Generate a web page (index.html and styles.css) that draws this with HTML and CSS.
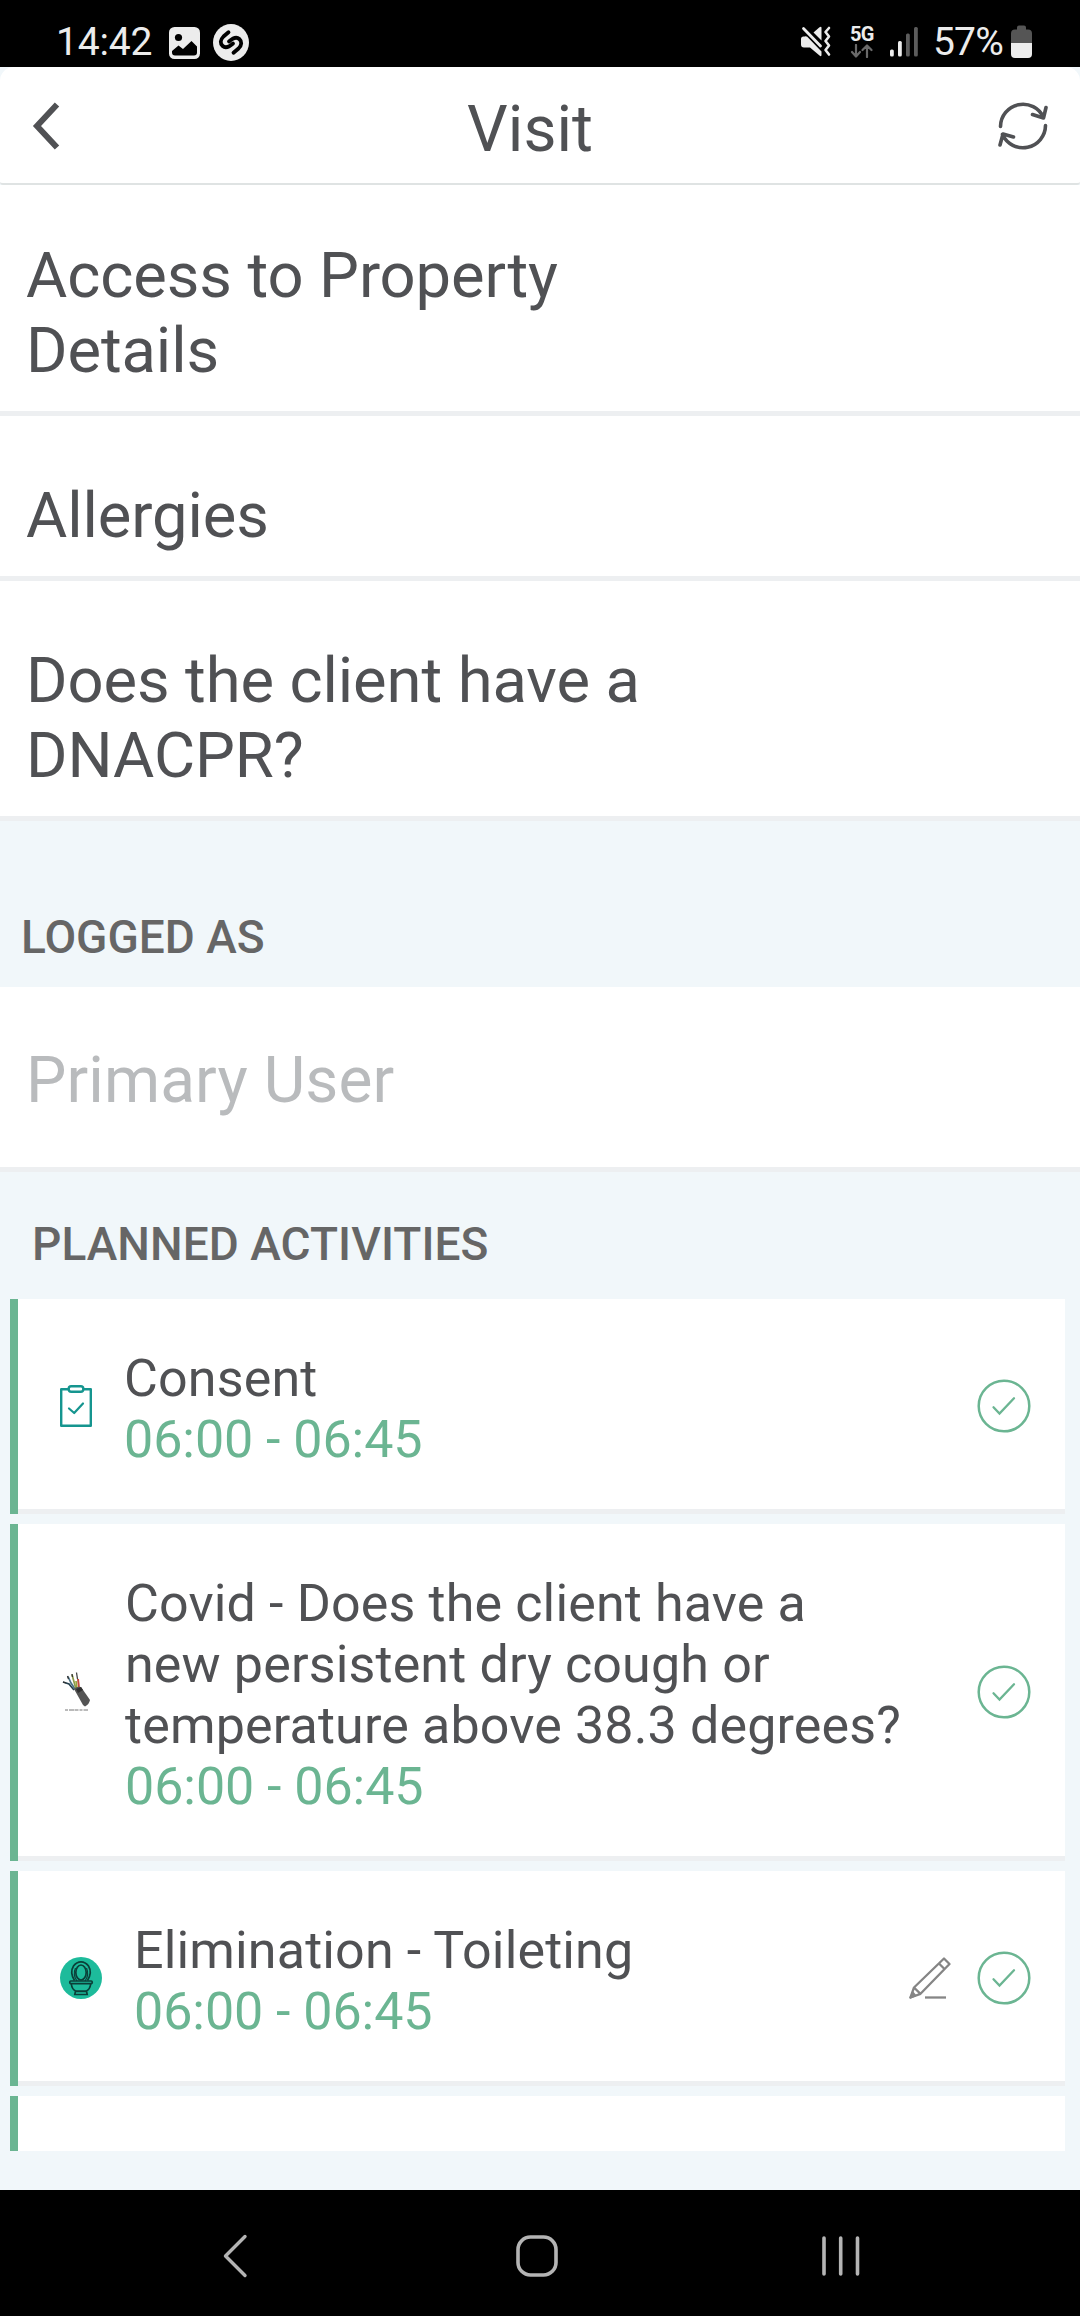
FILE: index.html
```html
<!DOCTYPE html>
<html lang="en">
<head>
<meta charset="utf-8">
<title>Visit</title>
<link rel="stylesheet" href="styles.css">
</head>
<body>
<svg width="0" height="0" class="defs">
  <symbol id="check" viewBox="0 0 54 54">
    <circle cx="27" cy="27" r="25.3" fill="none" stroke="#6bb592" stroke-width="2.5"/>
    <path d="M16.5 28.3 L22.5 34.5 L37 19.3" fill="none" stroke="#6bb592" stroke-width="2.3" stroke-linecap="round"/>
  </symbol>
</svg>
<div class="screen">
  <div class="status">
    <span class="clock">14:42</span>
    <svg class="s-image" width="31" height="32" viewBox="0 0 31 32">
      <rect width="31" height="32" rx="5.5" fill="#ececec"/>
      <circle cx="9.5" cy="10.5" r="3.6" fill="#000"/>
      <path d="M3 24 L9.500 18.500 L14 22 L22.500 14 L28 19.500 V25.500 Q28 28.500 25 28.500 H6 Q3 28.500 3 25.500 Z" fill="#000"/>
    </svg>
    <svg class="s-music" width="36" height="37" viewBox="0 0 36 37">
      <ellipse cx="18" cy="18.500" rx="18" ry="18.500" fill="#ececec"/>
      <g fill="none" stroke="#000" stroke-width="3.800" stroke-linecap="round">
        <path d="M15.500 8.300 L10.500 12.500 C7 16 7 19.500 9.700 22 C12.500 24.500 15.500 23.500 20 19.500"/>
        <path d="M20.500 28.700 L25.500 24.500 C29 21 29 17.500 26.300 15 C23.500 12.500 20.500 13.500 16 17.500"/>
      </g>
    </svg>
    <svg class="s-mute" width="31" height="31" viewBox="0 0 31 31">
      <path d="M0 13 Q0 10.500 2.500 10.500 H6 L20.500 25.500 V29 Q20.500 31 18.500 29.500 L9 21.500 H3 Q0 21.500 0 18.500 Z" fill="#ececec"/>
      <path d="M12.500 6.500 L18.500 1.300 Q20.500 0 20.500 2 V14.500 Z" fill="#ececec"/>
      <path d="M2.500 2.500 L19.500 20" stroke="#ececec" stroke-width="2.800" stroke-linecap="round"/>
      <path d="M4 10 L14 20 V24 L5 16 Z" fill="#ececec"/>
      <path d="M28 2 L24.500 6 L28 10.500 L24.500 15 L28 19.500 L24.500 24 L28 28.500" fill="none" stroke="#ececec" stroke-width="2.600" stroke-linecap="round" stroke-linejoin="round"/>
    </svg>
    <div class="net">
      <span>5G</span>
      <svg width="24" height="14" viewBox="0 0 24 14" fill="none" stroke="#6a6a6a" stroke-width="2.200" stroke-linecap="round" stroke-linejoin="round">
        <path d="M6 1 V12 M2 8 L6 12.500 L10 8 M17 13 V2 M12.500 6 L17 1.500 L21.500 6"/>
      </svg>
    </div>
    <svg class="s-signal" width="29" height="30" viewBox="0 0 29 30">
      <rect x="0" y="22.500" width="3.800" height="7" rx="1.500" fill="#ececec"/>
      <rect x="8" y="14" width="3.800" height="15.500" rx="1.500" fill="#ececec"/>
      <rect x="16" y="6.500" width="3.800" height="23" rx="1.500" fill="#5c5c5c"/>
      <rect x="24" y="0" width="3.800" height="29.500" rx="1.500" fill="#5c5c5c"/>
    </svg>
    <span class="percent">57%</span>
    <svg class="s-battery" width="21" height="33" viewBox="0 0 21 33">
      <path d="M6 4.500 V2.500 Q6 0.500 8 0.500 H13 Q15 0.500 15 2.500 V4.500 H17 Q21 4.500 21 8.500 V18 H0 V8.500 Q0 4.500 4 4.500 Z" fill="#555"/>
      <path d="M0 18 H21 V29 Q21 33 17 33 H4 Q0 33 0 29 Z" fill="#ececec"/>
    </svg>
  </div>

  <header class="header">
    <svg width="30" height="50" viewBox="0 0 30 50">
      <path d="M26 3.500 L6 25 L26 46.500" fill="none" stroke="#505154" stroke-width="6"/>
    </svg>
    <h1>Visit</h1>
    <svg width="50" height="50" viewBox="0 0 50 50" fill="none" stroke="#505154" stroke-width="3.600" stroke-linecap="round" stroke-linejoin="round">
      <path d="M2.500 25.500 A22.500 22.500 0 0 1 45.500 16.500 M34.500 13.500 L45.500 17 L48 6.500"/>
      <path d="M47.500 24.500 A22.500 22.500 0 0 1 4.500 33.500 M15.500 36 L5 33 L2 44"/>
    </svg>
  </header>

  <main>
    <div class="row row-first"><p>Access to Property Details</p></div>
    <div class="row"><p>Allergies</p></div>
    <div class="row"><p>Does the client have a DNACPR?</p></div>
    <h2 class="logged">LOGGED AS</h2>
    <div class="row user"><p>Primary User</p></div>
    <h2 class="planned">PLANNED ACTIVITIES</h2>
    <div class="cards">
      <article class="card">
        <svg class="icon" width="32" height="42" viewBox="0 0 32 42" fill="none" stroke="#15958f" stroke-width="2.400" stroke-linejoin="round">
          <path d="M8 4.200 H1.200 V40.800 H30.800 V4.200 H24"/>
          <rect x="8.700" y="1.300" width="14.600" height="5.400" rx="2.500"/>
          <path d="M9 23.500 L14.200 28 L23 18.500" stroke-linecap="round" stroke-width="2.200"/>
        </svg>
        <div class="text text-1"><p>Consent</p><time>06:00 - 06:45</time></div>
        <svg class="check" width="54" height="54"><use href="#check"/></svg>
      </article>
      <article class="card">
        <svg class="icon" width="32" height="42" viewBox="0 0 32 42">
          <g fill="none" stroke-width="1.700">
            <path d="M14 19 L9 13 L3 11" stroke="#26404d"/>
            <path d="M15 18 L11 12 L8 5.500" stroke="#4d7388"/>
            <path d="M16 18 L13.500 9 L12 3.500" stroke="#8e9a48"/>
            <path d="M17 18 L16 10" stroke="#96a63c"/>
            <path d="M19 17 L18 8" stroke="#c34b3e" stroke-width="2"/>
            <path d="M17.500 8 L16.500 1.500" stroke="#444" stroke-width="1.300"/>
            <path d="M12.500 6 L12 3 M8.500 8 L7.500 5 M3 11 L6 12" stroke="#333" stroke-width="1.300"/>
          </g>
          <path d="M14 18 Q17 15 21 16 L30 29 Q29 33.500 25 35.500 L23 34 Z" fill="#545454"/>
          <path d="M16 18 L21 16 L23 19 L18 22 Z" fill="#303030"/>
          <path d="M5 39 H28" stroke="#777" stroke-width="1" stroke-dasharray="3 1 5 .5 4 1"/>
        </svg>
        <div class="text text-2"><p>Covid - Does the client have a new persistent dry cough or temperature above 38.3 degrees?</p><time>06:00 - 06:45</time></div>
        <svg class="check" width="54" height="54"><use href="#check"/></svg>
      </article>
      <article class="card">
        <svg class="icon" width="42" height="42" viewBox="0 0 42 42" fill="none" stroke="#0b3f38" stroke-width="1.700">
          <circle cx="21" cy="21" r="21" fill="#1dbb9b" stroke="none"/>
          <path d="M14.500 23.500 Q9.500 15.500 13.500 9 Q16.500 4.800 21 4.800 Q25.500 4.800 28.500 9 Q32.500 15.500 27.500 23.500"/>
          <ellipse cx="21" cy="15.500" rx="5.200" ry="7.500"/>
          <path d="M17 24 Q12.500 18 15.500 11 M25 24 Q29.500 18 26.500 11" stroke-width="1.200"/>
          <rect x="9.800" y="24" width="22.400" height="2.600" rx="1"/>
          <path d="M11.300 27 Q12 32.500 16 34.200 H26 Q30 32.500 30.700 27 M15.500 34.200 L14.800 37.500 H27.200 L26.500 34.200 M15 34.500 H27"/>
        </svg>
        <div class="text text-3"><p>Elimination - Toileting</p><time>06:00 - 06:45</time></div>
        <svg class="pencil" width="42" height="42" viewBox="0 0 42 42" fill="none" stroke="#858585" stroke-width="2.300" stroke-linejoin="round">
          <path d="M5 30.500 L35 1.500 L40.500 7 L11.500 36.800 L1.500 40.500 Z M5 30.500 L11.500 36.800 M30 6.500 L35.500 12"/>
          <path d="M1.500 40.500 L4 36 L6 38.500 Z" fill="#858585"/>
          <path d="M16 40.500 H37"/>
        </svg>
        <svg class="check" width="54" height="54"><use href="#check"/></svg>
      </article>
      <div class="card card-cut"></div>
    </div>
  </main>

  <nav class="nav">
    <svg width="26" height="44" viewBox="0 0 26 44"><path d="M23 2.500 L3.500 22 L23 41.500" fill="none" stroke="#b4b4b4" stroke-width="3.400" stroke-linecap="round" stroke-linejoin="round"/></svg>
    <svg width="42" height="44" viewBox="0 0 42 44"><rect x="2" y="3" width="38" height="38" rx="12.500" fill="none" stroke="#b4b4b4" stroke-width="3.600"/></svg>
    <svg width="38" height="44" viewBox="0 0 38 44"><path d="M2 4 V40 M18.700 4 V40 M35.500 4 V40" stroke="#b4b4b4" stroke-width="3.600" stroke-linecap="round"/></svg>
  </nav>
</div>
</body>
</html>
```
FILE: styles.css
```css
* { box-sizing: border-box; }
body { margin: 0; background: #f1f7fa; font-family: Roboto, sans-serif; color: #505154; }
h1, h2, p { margin: 0; font-weight: 400; }
svg { display: block; flex: none; }
.defs { position: absolute; }
.screen { width: 1080px; height: 2316px; display: flex; flex-direction: column; overflow: hidden; }

.status { height: 67px; flex: none; background: #000; color: #ececec; display: flex; align-items: flex-start; padding-left: 56px; font-size: 39px; line-height: 46px; }
.clock { width: 113px; padding-top: 19px; letter-spacing: -0.2px; }
.s-image { margin-top: 27px; }
.s-music { margin: 24px 0 0 13px; }
.s-mute { margin: 26px 0 0 552px; }
.net { width: 24px; margin: 24px 0 0 18px; font-size: 20px; line-height: 20px; font-weight: 700; }
.net span { display: block; letter-spacing: -0.6px; }
.s-signal { margin: 27px 0 0 16px; }
.percent { width: 78px; margin-left: 14px; padding-top: 19px; letter-spacing: -0.8px; }
.s-battery { margin-top: 25px; }

.header { height: 118px; flex: none; background: #fff; border-bottom: 2px solid #dfe3e3; border-radius: 14px 14px 3px 3px; display: flex; align-items: flex-start; justify-content: space-between; padding: 34px 32px 0 31px; }
.header h1 { font-size: 64px; line-height: 75px; margin: -9px 0 0 1px; }

main { flex: 1; min-height: 0; }
.row { background: #fff; border-bottom: 5px solid #edeff1; padding: 62px 26px 23px; font-size: 63.3px; line-height: 75px; letter-spacing: -0.1px; }
.row p { max-width: 642px; }
.row-first { padding-top: 53px; }
.user { padding: 56px 26px 49px; color: #b9bbbd; font-size: 64px; letter-spacing: 0.1px; }
h2 { font-size: 46px; line-height: 54px; font-weight: 500; color: #666; }
.logged { height: 166px; padding: 89px 21px 0; }
.planned { height: 127px; padding: 45px 32px 0; letter-spacing: 0.06px; }

.cards { display: flex; flex-direction: column; gap: 10px; padding: 0 15px 0 10px; }
.card { display: flex; align-items: center; background: linear-gradient(#edeff1, #edeff1) bottom / 100% 5px no-repeat #fff; border-left: 8px solid #6bb592; padding: 49px 34px 44px 42px; font-size: 52px; line-height: 61px; }
.card-cut { height: 55px; padding: 0; background: #fff; }
.icon, .check, .pencil { margin-bottom: 6px; }
.text p { max-width: 780px; letter-spacing: 0.15px; }
.text time { display: block; color: #6bb592; letter-spacing: -0.05px; }
.text-1 { margin-left: 32px; }
.text-2 { margin-left: 33px; }
.text-3 { margin-left: 32px; }
.check { margin-left: auto; }
.pencil { margin-left: auto; }
.pencil + .check { margin-left: 26px; }

.nav { height: 126px; flex: none; background: #000; display: flex; justify-content: space-between; padding: 44px 220px 0 222px; }
.nav svg:nth-child(2) { margin-left: 3px; }
```
